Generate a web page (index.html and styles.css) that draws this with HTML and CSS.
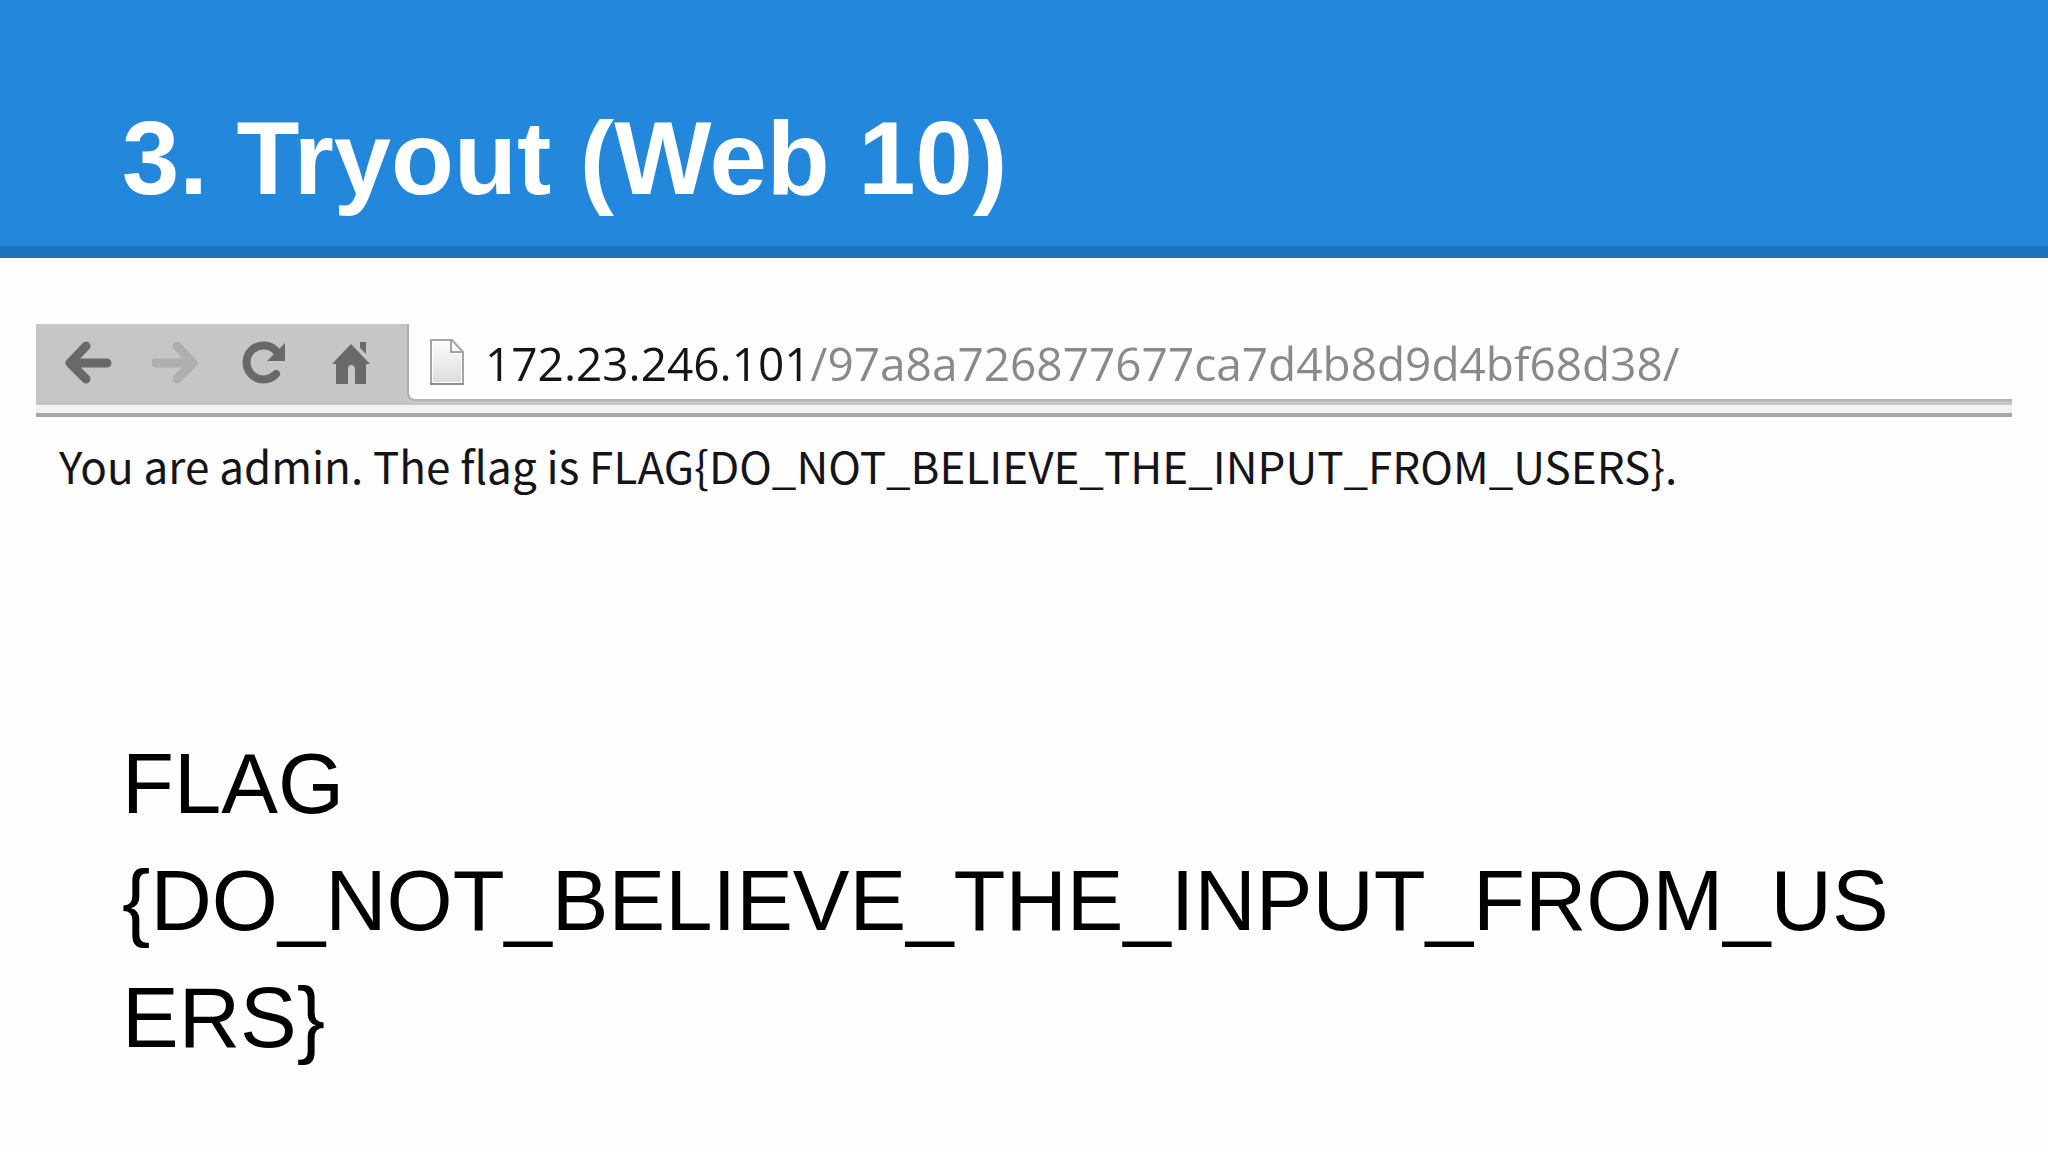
FILE: index.html
```html
<!DOCTYPE html>
<html lang="en">
<head>
  <meta charset="UTF-8">
  <meta name="viewport" content="width=device-width, initial-scale=1.0">
  <title>3. Tryout (Web 10)</title>
  <link rel="stylesheet" href="styles.css">
</head>
<body>
  <header class="slide-header">
    <h1>3. Tryout (Web 10)</h1>
  </header>
  <main>
    <div class="browser">
      <div class="toolbar">
        <button type="button" aria-label="Back">
          <svg viewBox="0 0 48 48"><path d="M22 7 L6 24 L22 40 M6 24 H43" class="arrow"/></svg>
        </button>
        <button type="button" aria-label="Forward" disabled>
          <svg viewBox="0 0 48 48"><path d="M25 7 L41 24 L25 40 M41 24 H3" class="arrow"/></svg>
        </button>
        <button type="button" aria-label="Reload">
          <svg viewBox="0 0 48 48">
            <path d="M36 35 A17 17 0 1 1 37 13" class="ring"/>
            <path d="M45 4 V22 H27 Z"/>
          </svg>
        </button>
        <button type="button" aria-label="Home">
          <svg viewBox="0 0 48 48">
            <path d="M23 5 L42 25 H38 V45 H27 V30 Q27 26 23 26 Q20 26 20 30 V45 H8 V25 H4 Z"/>
            <path d="M32 3 H38 V15 L32 9 Z"/>
          </svg>
        </button>
        <div class="address">
          <svg viewBox="0 0 36 48" class="page-icon">
            <defs>
              <linearGradient id="paper" x1="0" y1="0" x2="0" y2="1">
                <stop offset="0" stop-color="#fbfafb"/>
                <stop offset="1" stop-color="#dedcdf"/>
              </linearGradient>
            </defs>
            <path d="M2 2 H23 L34 14 V46 H2 Z" fill="#fff" stroke="#a5a3a6" stroke-width="2"/>
            <path d="M4 4 H21 V16 H32 V44 H4 Z" fill="url(#paper)"/>
            <path d="M22 2 V14 H34" fill="none" stroke="#a5a3a6" stroke-width="2"/>
            <path d="M1 46 H35" stroke="#8f8d91" stroke-width="2"/>
          </svg>
          <input type="text" aria-label="Address" value="172.23.246.101/97a8a726877677ca7d4b8d9d4bf68d38/" spellcheck="false">
        </div>
      </div>
      <p class="message">You are admin. The flag is FLAG{DO_NOT_BELIEVE_THE_INPUT_FROM_USERS}.</p>
    </div>
    <p class="answer">FLAG<wbr>{DO_NOT_BELIEVE_THE_INPUT_FROM_USERS}</p>
  </main>
</body>
</html>
```
FILE: styles.css
```css
*{ padding: 0; margin: 0; box-sizing: border-box;}
body{ background-color: #fefefe; font-family: "Liberation Sans", Arial, sans-serif;}

.slide-header{ padding: 97px 122px 25px; background-color: #2388dc; border-bottom: 12px solid #1d73ba;}
.slide-header h1{ font-size: 103px; line-height: 124px; color: #fff;}

.browser{ margin: 66px 36px 0;}
.toolbar{ display: flex; align-items: center;
      padding: 0 0 4px 8px;
      background-color: #c8c5c8;
}
.toolbar button{ width: 88px; height: 48px; border: 0; background: none; color: #6a686b;}
.toolbar button:disabled{ color: #b0aeb1;}
.toolbar button svg{ display: block; width: 48px; height: 48px; margin: auto; fill: currentColor;}
.toolbar .arrow{ fill: none; stroke: currentColor; stroke-width: 9px; stroke-linecap: round; stroke-linejoin: round;}
.toolbar .ring{ fill: none; stroke: currentColor; stroke-width: 8px; stroke-linecap: round;}

.address{ flex: 1; display: flex; align-items: center; gap: 20px;
      height: 77px; margin-left: 11px; padding-left: 20px;
      background-color: #fefefe;
      border-left: 2px solid #aeacaf; border-bottom: 2px solid #b4b2b5;
      border-bottom-left-radius: 8px;
}
.page-icon{ width: 36px; height: 48px;}
/* host dark, path grey */
.address input{ flex: 1; min-width: 0; height: 68px; padding-top: 2px; border: 0; outline: 0;
      font-family: "Open Sans", sans-serif; font-size: 46px;
      color: transparent;
      background: linear-gradient(to right, #161418 326px, #8a888b 326px);
      -webkit-background-clip: text; background-clip: text;
}

.message{ padding: 20px 23px 0;
      border-top: 4px solid #a8a6a9; box-shadow: 0 -8px #f4f2f5;
      margin-top: 8px;
      font-family: "Noto Sans CJK JP", sans-serif; font-size: 44px; line-height: 56px; color: #161418;
}

.answer{ margin: 232px 120px 0 122px; font-size: 85px; line-height: 117px; color: #000; overflow-wrap: anywhere;}
```
